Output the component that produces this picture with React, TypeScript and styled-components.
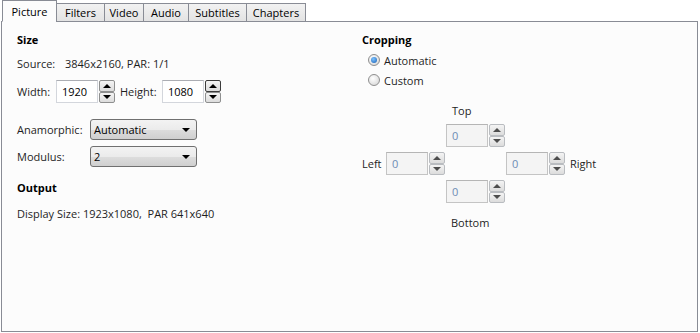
import styled, { createGlobalStyle } from "styled-components";

const Global = createGlobalStyle`
  html, body {
    margin: 0;
    padding: 0;
    background: #ffffff;
  }
  body {
    font-family: "Open Sans", "Noto Sans", sans-serif;
    font-size: 11px;
    color: #1e1e1e;
  }
`;

const Page = styled.div`
  width: 700px;
  height: 333px;
  box-sizing: border-box;
  padding: 0 2px 1px 1px;
  display: flex;
  flex-direction: column;
`;

const TabBar = styled.div`
  display: flex;
  align-items: flex-end;
  height: 22px;
  padding-left: 1px;
  margin-bottom: -1px;
  position: relative;
  z-index: 1;
`;

const Tab = styled.div<{ $active?: boolean; $w: number }>`
  box-sizing: border-box;
  width: ${(p) => p.$w}px;
  height: ${(p) => (p.$active ? "22px" : "19px")};
  margin-left: ${(p) => (p.$active ? "0" : "-1px")};
  border: 1px solid #898c95;
  border-bottom: ${(p) => (p.$active ? "1px solid #fcfcfc" : "1px solid #898c95")};
  background: ${(p) =>
    p.$active ? "#fcfcfc" : "linear-gradient(#f2f2f2, #e3e3e3)"};
  display: flex;
  align-items: center;
  justify-content: center;
  line-height: 1;
  color: #000;
  &:first-child {
    margin-left: 0;
  }
`;

const Panel = styled.div`
  flex: 1;
  border: 1px solid #898c95;
  background: #fcfcfc;
  display: flex;
  padding-left: 15px;
`;

const LeftCol = styled.div`
  width: 345px;
  display: flex;
  flex-direction: column;
`;

const RightCol = styled.div`
  display: flex;
  flex-direction: column;
`;

const Heading = styled.div<{ $top: number }>`
  font-weight: 700;
  height: 18px;
  line-height: 18px;
  margin-top: ${(p) => p.$top}px;
  color: #000;
`;

const Row = styled.div<{ $top: number; $h?: number }>`
  display: flex;
  align-items: center;
  height: ${(p) => p.$h ?? 18}px;
  margin-top: ${(p) => p.$top}px;
  white-space: pre;
`;

const Label = styled.span<{ $w?: number; $gap?: number }>`
  width: ${(p) => (p.$w ? `${p.$w}px` : "auto")};
  margin-left: ${(p) => p.$gap ?? 0}px;
  flex-shrink: 0;
  color: #1e1e1e;
`;

const SpinWrap = styled.div`
  display: flex;
  align-items: stretch;
  gap: 1px;
  height: 23px;
`;

const NumBox = styled.div<{ $disabled?: boolean }>`
  width: 42px;
  box-sizing: border-box;
  border: 1px solid ${(p) => (p.$disabled ? "#c4c4c4" : "#d3d6dc")};
  border-top-color: ${(p) => (p.$disabled ? "#b5b5b5" : "#abadb3")};
  background: ${(p) => (p.$disabled ? "#f4f4f4" : "#ffffff")};
  color: ${(p) => (p.$disabled ? "#6d8cb5" : "#000")};
  display: flex;
  align-items: center;
  padding-left: 5px;
`;

const Arrows = styled.div`
  display: flex;
  flex-direction: column;
  width: 16px;
`;

const ArrowBtn = styled.div<{ $disabled?: boolean; $dark?: boolean }>`
  flex: 1;
  box-sizing: border-box;
  border: 1px solid
    ${(p) => (p.$dark ? "#3c3c3c" : p.$disabled ? "#b9bcc0" : "#8e8f8f")};
  border-radius: 2px;
  background: linear-gradient(#f4f4f4, #dcdcdc);
  display: flex;
  align-items: center;
  justify-content: center;
`;

const Tri = styled.div<{ $down?: boolean; $disabled?: boolean }>`
  width: 0;
  height: 0;
  border-left: 4px solid transparent;
  border-right: 4px solid transparent;
  ${(p) =>
    p.$down
      ? `border-top: 4px solid ${p.$disabled ? "#4d4d4d" : "#000"};`
      : `border-bottom: 4px solid ${p.$disabled ? "#4d4d4d" : "#000"};`}
`;

const Select = styled.div`
  width: 107px;
  height: 21px;
  box-sizing: border-box;
  border: 1px solid #707070;
  border-radius: 3px;
  background: linear-gradient(#f3f3f3 0%, #ebebeb 50%, #dddddd 51%, #cfcfcf 100%);
  display: flex;
  align-items: center;
  justify-content: space-between;
  padding: 0 6px 0 3px;
  color: #000;
`;

const Radio = styled.div<{ $checked?: boolean }>`
  width: 12px;
  height: 12px;
  border-radius: 50%;
  box-sizing: border-box;
  border: 1px solid #8f8f8f;
  background: radial-gradient(circle at 40% 35%, #ffffff, #d2d2d2);
  display: flex;
  align-items: center;
  justify-content: center;
  margin: 0 4px 0 6px;
  &::after {
    content: "";
    display: ${(p) => (p.$checked ? "block" : "none")};
    width: 6px;
    height: 6px;
    border-radius: 50%;
    background: radial-gradient(circle at 40% 35%, #7cc3ff, #1a5fb4);
  }
`;

const CropGrid = styled.div`
  display: grid;
  grid-template-columns: 24px 60px 60px 60px auto;
  grid-template-rows: 18px 23px 23px 23px 22px;
  row-gap: 5px;
  margin-top: 12px;
  align-items: center;
`;

const CropLabel = styled.div<{ $col: number; $row: number; $pad?: number }>`
  grid-column: ${(p) => p.$col};
  grid-row: ${(p) => p.$row};
  padding-left: ${(p) => p.$pad ?? 0}px;
  align-self: ${(p) => (p.$row === 5 ? "end" : "center")};
  color: #1e1e1e;
`;

const CropCell = styled.div<{ $col: number; $row: number }>`
  grid-column: ${(p) => p.$col};
  grid-row: ${(p) => p.$row};
`;

function Spin({
  value,
  disabled,
  dark,
}: {
  value: string;
  disabled?: boolean;
  dark?: boolean;
}) {
  return (
    <SpinWrap>
      <NumBox $disabled={disabled}>{value}</NumBox>
      <Arrows>
        <ArrowBtn $disabled={disabled} $dark={dark}>
          <Tri $disabled={disabled} />
        </ArrowBtn>
        <ArrowBtn $disabled={disabled}>
          <Tri $down $disabled={disabled} />
        </ArrowBtn>
      </Arrows>
    </SpinWrap>
  );
}

const tabs: [string, number][] = [
  ["Picture", 55],
  ["Filters", 49],
  ["Video", 40],
  ["Audio", 46],
  ["Subtitles", 59],
  ["Chapters", 60],
];

export default function App() {
  return (
    <Page>
      <Global />
      <TabBar>
        {tabs.map(([t, w], i) => (
          <Tab key={t} $active={i === 0} $w={w}>
            {t}
          </Tab>
        ))}
      </TabBar>
      <Panel>
        <LeftCol>
          <Heading $top={9}>Size</Heading>
          <Row $top={5}>
            <Label $w={48}>Source:</Label>
            <Label>3846x2160, PAR: 1/1</Label>
          </Row>
          <Row $top={8} $h={23}>
            <Label $w={39}>Width:</Label>
            <Spin value="1920" />
            <Label $w={42} $gap={5}>
              Height:
            </Label>
            <Spin value="1080" dark />
          </Row>
          <Row $top={16} $h={21}>
            <Label $w={73}>Anamorphic:</Label>
            <Select>
              <span>Automatic</span>
              <Tri $down />
            </Select>
          </Row>
          <Row $top={6} $h={21}>
            <Label $w={73}>Modulus:</Label>
            <Select>
              <span>2</span>
              <Tri $down />
            </Select>
          </Row>
          <Heading $top={12}>Output</Heading>
          <Row $top={7}>
            <Label>Display Size: 1923x1080,  PAR 641x640</Label>
          </Row>
        </LeftCol>
        <RightCol>
          <Heading $top={9}>Cropping</Heading>
          <Row $top={2}>
            <Radio $checked />
            <Label>Automatic</Label>
          </Row>
          <Row $top={2}>
            <Radio />
            <Label>Custom</Label>
          </Row>
          <CropGrid>
            <CropLabel $col={3} $row={1} $pad={6}>
              Top
            </CropLabel>
            <CropCell $col={3} $row={2}>
              <Spin value="0" disabled />
            </CropCell>
            <CropLabel $col={1} $row={3}>
              Left
            </CropLabel>
            <CropCell $col={2} $row={3}>
              <Spin value="0" disabled />
            </CropCell>
            <CropCell $col={4} $row={3}>
              <Spin value="0" disabled />
            </CropCell>
            <CropLabel $col={5} $row={3} $pad={4}>
              Right
            </CropLabel>
            <CropCell $col={3} $row={4}>
              <Spin value="0" disabled />
            </CropCell>
            <CropLabel $col={3} $row={5} $pad={5}>
              Bottom
            </CropLabel>
          </CropGrid>
        </RightCol>
      </Panel>
    </Page>
  );
}
